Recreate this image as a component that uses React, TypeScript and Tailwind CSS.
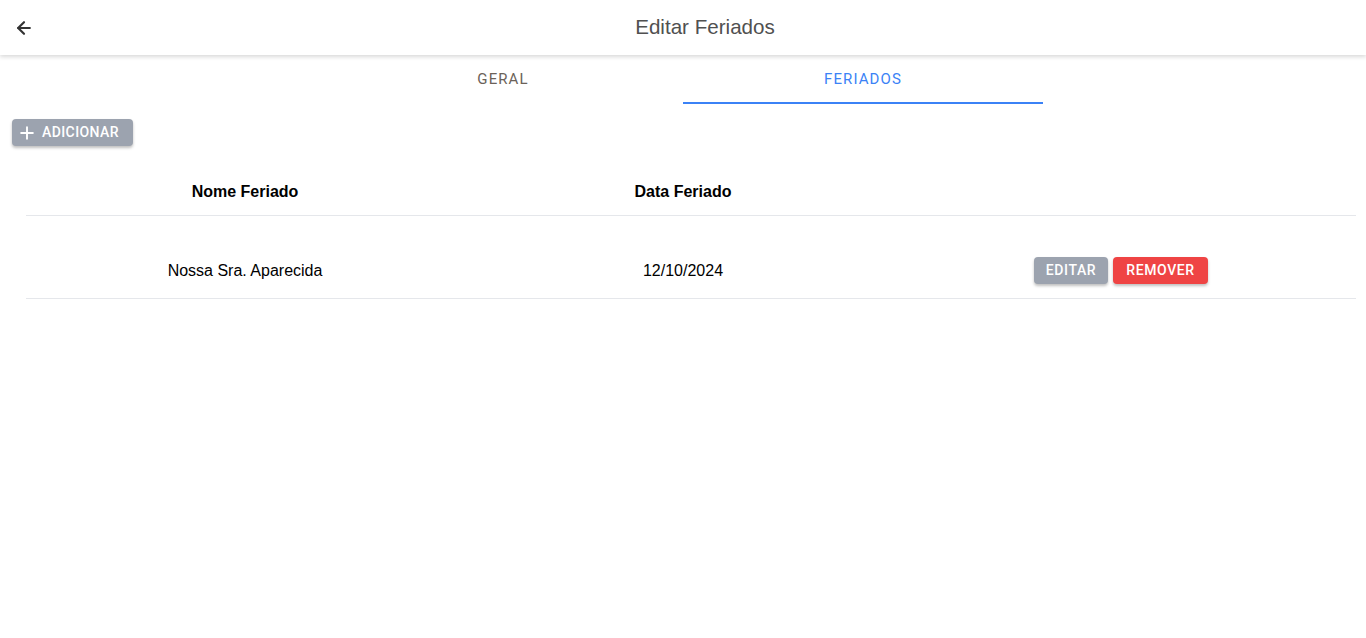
import { ArrowLeft, Plus } from "lucide-react";

const holidays = [{ id: 1, name: "Nossa Sra. Aparecida", date: "12/10/2024" }];

export default function App() {
  return (
    <div className="min-h-screen bg-white">
      <header className="relative flex h-[55px] items-center justify-center bg-white pl-[44px] shadow-[0_2px_4px_rgba(0,0,0,0.15)]">
        <button className="absolute left-[12px] top-[16px] p-0.5 text-[#333]">
          <ArrowLeft className="h-[20px] w-[20px]" strokeWidth={2.6} />
        </button>
        <h1 className="font-['Liberation_Sans',Arial,sans-serif] text-[20.6px] text-[#505050]">
          Editar Feriados
        </h1>
      </header>

      <nav className="flex justify-center pt-[10px] font-['Roboto',sans-serif] text-[15px] tracking-[1.1px]">
        <button className="h-[39px] w-[360px] border-b-2 border-transparent pb-[8px] text-[#6b6259]">
          GERAL
        </button>
        <button className="h-[39px] w-[360px] border-b-2 border-[#3b82f6] pb-[8px] text-[#3b82f6]">
          FERIADOS
        </button>
      </nav>

      <div className="px-3 pt-[15px]">
        <button className="flex h-[27px] items-center gap-[5px] rounded bg-[#9ca3af] pl-[5px] pr-[14px] font-['Roboto',sans-serif] text-[14px] font-medium tracking-[0.4px] text-white shadow-[0_2px_3px_rgba(0,0,0,0.25)]">
          <Plus className="h-[20px] w-[20px]" strokeWidth={2.3} />
          ADICIONAR
        </button>
      </div>

      <div className="ml-[26px] mr-[10px] mt-[23px] font-['Liberation_Sans',Arial,sans-serif] text-[16px] text-black">
        <div className="grid h-[47px] grid-cols-[438px_438px_438px_1fr] items-center border-b border-gray-200 font-bold">
          <div className="text-center">Nome Feriado</div>
          <div className="text-center">Data Feriado</div>
          <div />
          <div />
        </div>
        {holidays.map((h) => (
          <div
            key={h.id}
            className="grid grid-cols-[438px_438px_438px_1fr] items-center border-b border-gray-200 pb-[14px] pt-[41px]"
          >
            <div className="text-center">{h.name}</div>
            <div className="text-center">{h.date}</div>
            <div className="flex justify-center gap-[5px] font-['Roboto',sans-serif] text-[14px] font-medium tracking-[0.6px] text-white">
              <button className="h-[27px] w-[74px] rounded bg-[#9ca3af] shadow-[0_2px_3px_rgba(0,0,0,0.25)]">
                EDITAR
              </button>
              <button className="h-[27px] w-[95px] rounded bg-[#ef4444] shadow-[0_2px_3px_rgba(0,0,0,0.25)]">
                REMOVER
              </button>
            </div>
            <div />
          </div>
        ))}
      </div>
    </div>
  );
}
